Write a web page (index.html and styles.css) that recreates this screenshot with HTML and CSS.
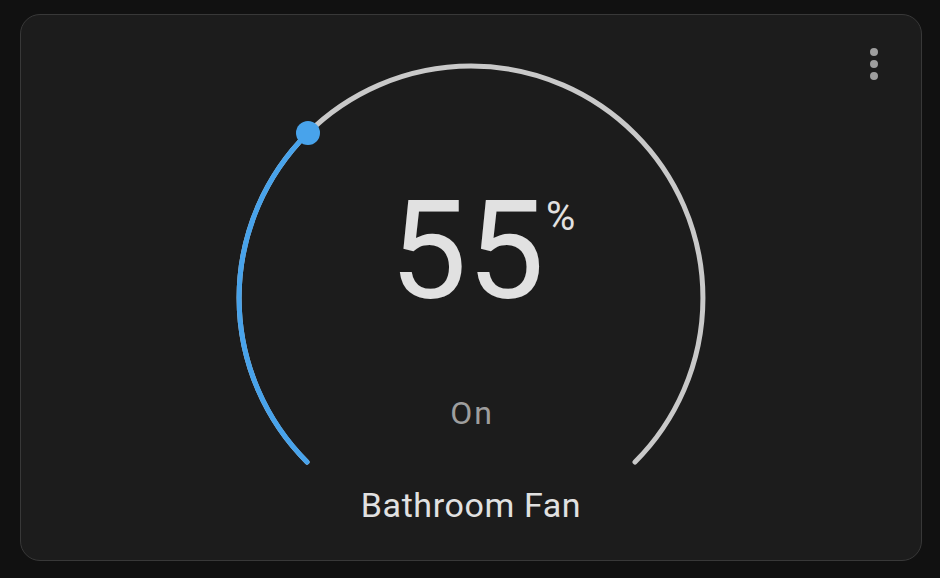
FILE: index.html
```html
<!DOCTYPE html>
<html>
<head>
    <title>Bathroom Fan</title>
    <link rel="stylesheet" href="styles.css">
</head>
<body>
    <div class="card">
        <button class="menu-button" aria-label="More options">
            <svg viewBox="0 0 24 24" width="48" height="48">
                <path d="M12,16A2,2 0 0,1 14,18A2,2 0 0,1 12,20A2,2 0 0,1 10,18A2,2 0 0,1 12,16M12,10A2,2 0 0,1 14,12A2,2 0 0,1 12,14A2,2 0 0,1 10,12A2,2 0 0,1 12,10M12,4A2,2 0 0,1 14,6A2,2 0 0,1 12,8A2,2 0 0,1 10,6A2,2 0 0,1 12,4Z"/>
            </svg>
        </button>

        <div class="gauge">
            <svg viewBox="0 0 480 410" width="480" height="410">
                <!-- background track, 270 degrees -->
                <path class="track" d="M 76 404 A 232 232 0 1 1 404 404"/>
                <!-- active part -->
                <path class="active" d="M 76 404 A 232 232 0 0 1 76 76"/>
                <circle class="knob" cx="77" cy="75" r="12"/>

                <text class="value" x="236" y="240">55</text>
                <text class="unit" x="315" y="172">%</text>
                <text class="state" x="241" y="366">On</text>
            </svg>
        </div>

        <div class="name">Bathroom Fan</div>
    </div>
</body>
</html>
```

FILE: styles.css
```css
body {
    background: #111111;
    font-family: Roboto, "Liberation Sans", sans-serif;
    margin: 0;
    padding: 14px 18px 17px 20px;
}

.card {
    position: relative;
    height: 547px;
    background: #1c1c1c;
    border: 1px solid #383838;
    border-radius: 20px;
    padding-top: 43px;
    box-sizing: border-box;
    display: flex;
    flex-direction: column;
    align-items: center;
}

.menu-button {
    position: absolute;
    top: 25px;
    right: 23px;
    width: 48px;
    height: 48px;
    padding: 0;
    border: none;
    background: none;
    cursor: pointer;
}

.menu-button svg {
    display: block;
    fill: #9e9e9e;
}

.gauge svg {
    display: block;
}

.track {
    fill: none;
    stroke: #c9c9c9;
    stroke-width: 5;
    stroke-linecap: round;
}

.active {
    fill: none;
    stroke: #48a3eb;
    stroke-width: 5;
    stroke-linecap: round;
}

.knob {
    fill: #48a3eb;
}

.value {
    fill: #e1e1e1;
    font-size: 138px;
    text-anchor: middle;
}

.unit {
    fill: #e1e1e1;
    font-size: 40px;
}

.state {
    fill: #9e9e9e;
    font-size: 32px;
    letter-spacing: 2px;
    text-anchor: middle;
}

.name {
    margin-top: 17px;
    color: #e1e1e1;
    font-size: 34px;
    line-height: 40px;
    letter-spacing: 0.6px;
}
```
